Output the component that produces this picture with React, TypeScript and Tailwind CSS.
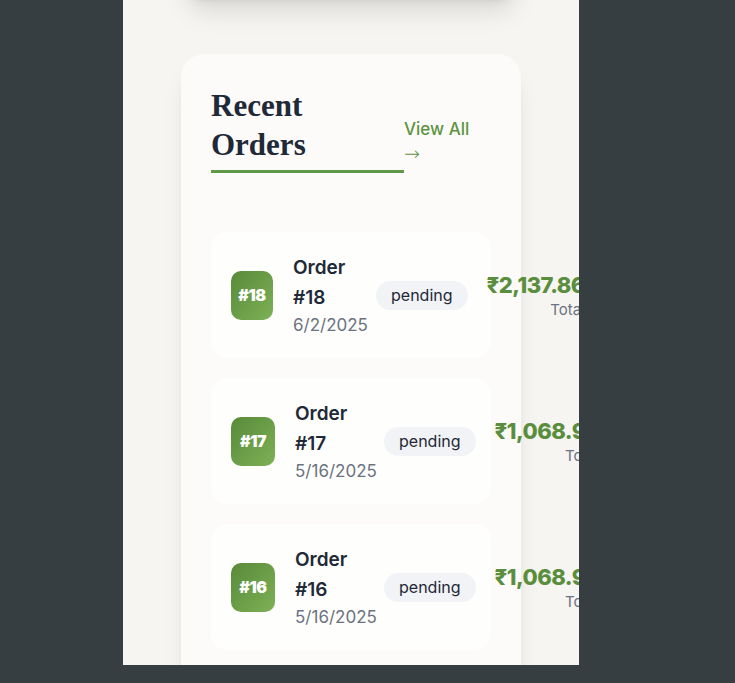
import React from 'react';

type Order = { id: number; date: string; total: string; badgeW: string; infoW: string };

const orders: Order[] = [
  { id: 18, date: '6/2/2025', total: '₹2,137.86', badgeW: 'w-[42px]', infoW: 'w-[78px]' },
  { id: 17, date: '5/16/2025', total: '₹1,068.93', badgeW: 'w-[44px]', infoW: 'w-[84px]' },
  { id: 16, date: '5/16/2025', total: '₹1,068.93', badgeW: 'w-[44px]', infoW: 'w-[84px]' },
];

const sans = "font-['Inter','Noto_Sans','DejaVu_Sans',sans-serif]";

const OrderRow: React.FC<{ order: Order }> = ({ order }) => (
  <div className="flex items-center rounded-2xl bg-[#fefefd] px-5 py-[21px]">
    <div
      className={`flex h-[49px] shrink-0 items-center justify-center rounded-[10px] bg-gradient-to-br from-[#588a39] to-[#7db156] text-[16px] font-black tracking-tight text-white ${order.badgeW}`}
    >
      #{order.id}
    </div>
    <div className={`ml-[20px] shrink-0 ${order.infoW}`}>
      <p className="text-[19px] font-semibold leading-[30px] text-[#1f2937]">Order #{order.id}</p>
      <p className="text-[17px] leading-6 text-[#6b7280]">{order.date}</p>
    </div>
    <span className="ml-[5px] shrink-0 rounded-full bg-[#f1f3f6] px-[15px] py-[4px] text-[16px] leading-[21px] text-[#1f2937]">
      pending
    </span>
    <div className="ml-[19px] shrink-0 text-right">
      <p className="text-[22px] font-extrabold leading-[30px] tracking-tight text-[#5a8e3d]">{order.total}</p>
      <p className="text-[15px] leading-5 text-[#6b7280]">Total</p>
    </div>
  </div>
);

const App: React.FC = () => {
  return (
    <div className={`min-h-[683px] bg-[#363e41] ${sans}`}>
      <div className="ml-[123px] h-[665px] w-[456px] overflow-hidden bg-[#f6f5f2] px-[58px]">
        {/* previous card, scrolled mostly out of view */}
        <div className="-mt-[102px] h-[100px] rounded-3xl bg-[#fcfbf9] shadow-xl" />

        <div className="mt-[56px] rounded-3xl bg-[#fcfbf9] px-[30px] pt-8 pb-10 shadow-xl">
          <div className="flex items-end">
            <h2 className="w-[193px] shrink-0 border-b-[3px] border-[#5f9846] pb-[6px] font-['Liberation_Serif','DejaVu_Serif',serif] text-[31px] font-bold leading-[39px] text-[#1f2937]">
              Recent Orders
            </h2>
            <a className="mb-[7px] w-[76px] shrink-0 text-[17px] font-medium leading-6 text-[#5d9443]">
              View All{' '}
              <span className="font-['DejaVu_Sans',sans-serif] text-[19px] font-extralight leading-6">→</span>
            </a>
          </div>

          <div className="mt-[59px] flex flex-col gap-5">
            {orders.map((o) => (
              <OrderRow key={o.id} order={o} />
            ))}
          </div>
        </div>
      </div>
    </div>
  );
};

export default App;
